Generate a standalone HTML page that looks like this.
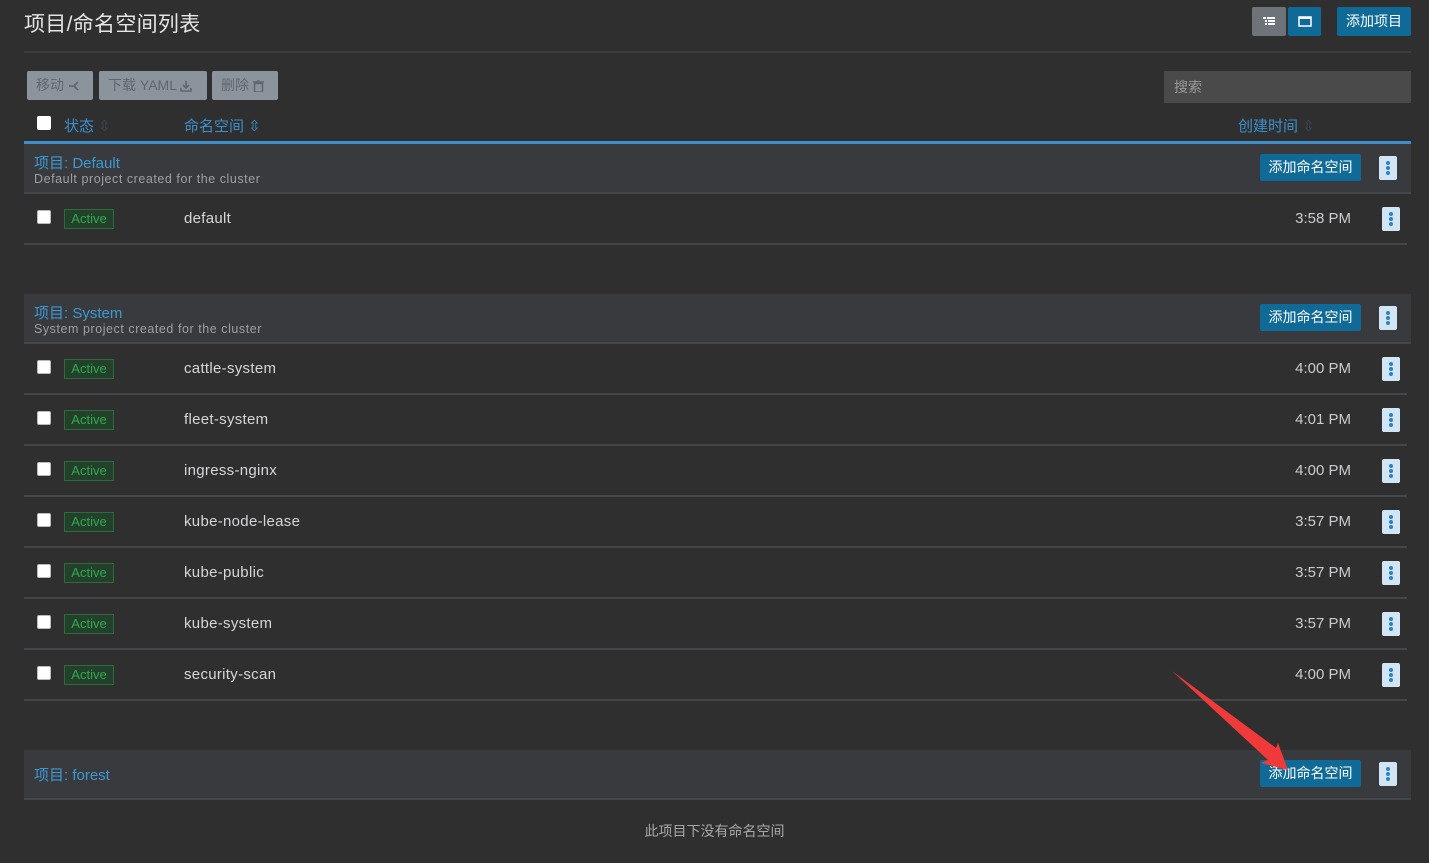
<!DOCTYPE html>
<html><head><meta charset="utf-8"><style>
*{margin:0;padding:0;box-sizing:border-box}
body{width:1429px;height:863px;background:#2f2f2f;font-family:"Liberation Sans","Noto Sans CJK SC",sans-serif;position:relative;overflow:hidden;color:#ccc}
.a{position:absolute}
.btn{position:absolute;background:#8b949c;color:#5f676e;font-size:14px;line-height:28px;padding:0 9px;border-radius:2px;height:29px;white-space:nowrap}
.btn svg{vertical-align:-2px}
.blue{background:#0f6a97;color:#fff;border-radius:2px;text-align:center}
.grp{position:absolute;left:24px;width:1387px;height:50px;background:#393a3d;border-bottom:2px solid #43464a}
.gt{position:absolute;left:10px;top:8px;color:#3d98d3;font-size:15px}
.gs{position:absolute;left:10px;top:28px;color:#9aa0a6;font-size:12.5px;letter-spacing:.55px}
.row{position:absolute;left:24px;width:1383px;height:51px;border-bottom:2px solid #43464a}
.cb{position:absolute;left:13px;top:16px;width:14px;height:14px;background:#fff;border-radius:2px;border:1px solid #bbb}
.bd{position:absolute;left:40px;top:15px;width:50px;height:20px;border:1px solid #2d6a3c;background:#23402b;color:#30a94f;font-size:13px;line-height:18px;text-align:center}
.ns{position:absolute;left:160px;top:16px;font-size:15px;color:#d4d7da;letter-spacing:.3px}
.tm{position:absolute;right:56px;top:16px;font-size:15px;color:#c8ccd0}
.kb{position:absolute;width:18px;height:24px;background:#d2e5f4;border-radius:2px}
.kb i{position:absolute;left:7px;width:4px;height:4px;border-radius:50%;background:#2f80c0}
.ab{position:absolute;width:101px;height:27px;line-height:27px;font-size:14px}
</style></head><body>
<div class="a" style="left:24px;top:8px;font-size:21px;color:#e6e6e6;letter-spacing:.3px">项目/命名空间列表</div>
<div class="a" style="left:1252px;top:7px;width:34px;height:29px;background:#6d7379;border-radius:2px"><svg width="34" height="29"><g fill="#fff"><rect x="11" y="10" width="3" height="2"/><rect x="15" y="10" width="8" height="2"/><rect x="13" y="13" width="2" height="2"/><rect x="16" y="13" width="7" height="2"/><rect x="13" y="16" width="2" height="2"/><rect x="16" y="16" width="7" height="2"/></g></svg></div>
<div class="a blue" style="left:1288px;top:7px;width:33px;height:29px"><svg width="33" height="29"><rect x="11" y="10" width="12" height="9" fill="none" stroke="#fff" stroke-width="1.5"/><rect x="11" y="10" width="12" height="2" fill="#fff"/></svg></div>
<div class="a blue" style="left:1337px;top:7px;width:74px;height:29px;line-height:29px;font-size:14px">添加项目</div>
<div class="a" style="left:24px;top:51px;width:1387px;height:2px;background:#3b3d40"></div>
<div class="btn" style="left:27px;top:71px;width:66px">移动 <svg width="12" height="12"><path d="M1 6H6M6 6L10 2M6 6L10 10" stroke="#5f676e" stroke-width="1.8" fill="none"/></svg></div>
<div class="btn" style="left:99px;top:71px;width:108px">下载 YAML <svg width="12" height="12"><path d="M6 1V8M3 5L6 8L9 5M1 8V11H11V8" stroke="#5f676e" stroke-width="1.6" fill="none"/></svg></div>
<div class="btn" style="left:212px;top:71px;width:66px">删除 <svg width="11" height="12"><path d="M0 2H11M4 0H7M1.5 3.5H9.5V12H1.5Z" stroke="#5f676e" stroke-width="1.6" fill="none"/></svg></div>
<div class="a" style="left:1164px;top:71px;width:247px;height:32px;background:#4a4a4a;color:#9a9a9a;font-size:14px;line-height:32px;padding-left:10px">搜索</div>
<div class="a" style="left:37px;top:116px;width:14px;height:14px;background:#fff;border-radius:2px"></div>
<div class="a" style="left:64px;top:115px;color:#3d8fcc;font-size:15px">状态 <span style="color:#3a4a58">⇳</span></div>
<div class="a" style="left:184px;top:115px;color:#3d8fcc;font-size:15px">命名空间 <span style="color:#3d8fcc">⇳</span></div>
<div class="a" style="left:1238px;top:115px;color:#3d8fcc;font-size:15px">创建时间 <span style="color:#3a4a58">⇳</span></div>
<div class="a" style="left:24px;top:141px;width:1387px;height:3px;background:#3d8fcc"></div>

<div class="grp" style="top:144px"><div class="gt">项目: Default</div><div class="gs">Default project created for the cluster</div></div>
<div class="ab blue" style="left:1260px;top:154px">添加命名空间</div>
<div class="kb" style="left:1379px;top:156px"><i style="top:5px"></i><i style="top:10px"></i><i style="top:15px"></i></div>
<div class="row" style="top:194px"><div class="cb"></div><div class="bd">Active</div><div class="ns">default</div><div class="tm">3:58 PM</div><div class="kb" style="left:1358px;top:13px"><i style="top:5px"></i><i style="top:10px"></i><i style="top:15px"></i></div></div>

<div class="grp" style="top:294px"><div class="gt">项目: System</div><div class="gs">System project created for the cluster</div></div>
<div class="ab blue" style="left:1260px;top:304px">添加命名空间</div>
<div class="kb" style="left:1379px;top:306px"><i style="top:5px"></i><i style="top:10px"></i><i style="top:15px"></i></div>
<div class="row" style="top:344px"><div class="cb"></div><div class="bd">Active</div><div class="ns">cattle-system</div><div class="tm">4:00 PM</div><div class="kb" style="left:1358px;top:13px"><i style="top:5px"></i><i style="top:10px"></i><i style="top:15px"></i></div></div>
<div class="row" style="top:395px"><div class="cb"></div><div class="bd">Active</div><div class="ns">fleet-system</div><div class="tm">4:01 PM</div><div class="kb" style="left:1358px;top:13px"><i style="top:5px"></i><i style="top:10px"></i><i style="top:15px"></i></div></div>
<div class="row" style="top:446px"><div class="cb"></div><div class="bd">Active</div><div class="ns">ingress-nginx</div><div class="tm">4:00 PM</div><div class="kb" style="left:1358px;top:13px"><i style="top:5px"></i><i style="top:10px"></i><i style="top:15px"></i></div></div>
<div class="row" style="top:497px"><div class="cb"></div><div class="bd">Active</div><div class="ns">kube-node-lease</div><div class="tm">3:57 PM</div><div class="kb" style="left:1358px;top:13px"><i style="top:5px"></i><i style="top:10px"></i><i style="top:15px"></i></div></div>
<div class="row" style="top:548px"><div class="cb"></div><div class="bd">Active</div><div class="ns">kube-public</div><div class="tm">3:57 PM</div><div class="kb" style="left:1358px;top:13px"><i style="top:5px"></i><i style="top:10px"></i><i style="top:15px"></i></div></div>
<div class="row" style="top:599px"><div class="cb"></div><div class="bd">Active</div><div class="ns">kube-system</div><div class="tm">3:57 PM</div><div class="kb" style="left:1358px;top:13px"><i style="top:5px"></i><i style="top:10px"></i><i style="top:15px"></i></div></div>
<div class="row" style="top:650px"><div class="cb"></div><div class="bd">Active</div><div class="ns">security-scan</div><div class="tm">4:00 PM</div><div class="kb" style="left:1358px;top:13px"><i style="top:5px"></i><i style="top:10px"></i><i style="top:15px"></i></div></div>

<div class="grp" style="top:750px"><div class="gt" style="top:14px">项目: forest</div></div>
<div class="ab blue" style="left:1260px;top:760px">添加命名空间</div>
<div class="kb" style="left:1379px;top:762px"><i style="top:5px"></i><i style="top:10px"></i><i style="top:15px"></i></div>
<div class="a" style="left:0;width:1429px;top:821px;text-align:center;font-size:14px;color:#a8a8a8">此项目下没有命名空间</div>

<svg class="a" style="left:0;top:0" width="1429" height="863"><path d="M1172 671 L1276 748 L1278 743 L1288 770 L1261 763 L1268 760 Z" fill="#f03a3a"/></svg>
</body></html>
